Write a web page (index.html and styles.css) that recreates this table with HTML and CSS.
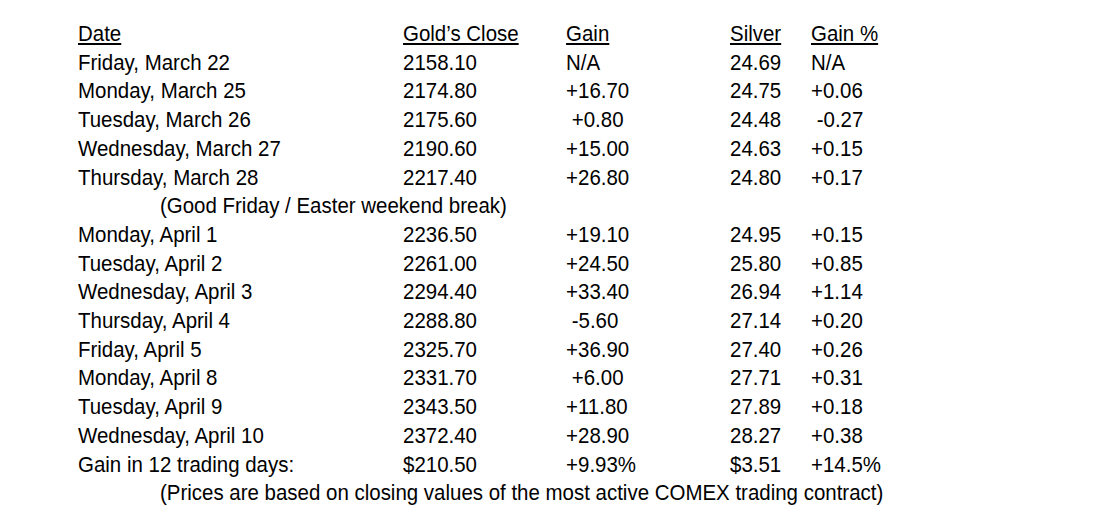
FILE: index.html
```html
<!DOCTYPE html>
<html>
<head>
<meta charset="utf-8">
<link rel="stylesheet" href="styles.css">
</head>
<body>
<div class="sheet">
  <div class="grid">
    <div class="h"><u>Date</u></div><div class="h"><u>Gold’s Close</u></div><div class="h"><u>Gain</u></div><div class="h"><u>Silver</u></div><div class="h"><u>Gain %</u></div>
    <div>Friday, March 22</div><div>2158.10</div><div>N/A</div><div>24.69</div><div>N/A</div>
    <div>Monday, March 25</div><div>2174.80</div><div>+16.70</div><div>24.75</div><div>+0.06</div>
    <div>Tuesday, March 26</div><div>2175.60</div><div>&nbsp;+0.80</div><div>24.48</div><div>&nbsp;-0.27</div>
    <div>Wednesday, March 27</div><div>2190.60</div><div>+15.00</div><div>24.63</div><div>+0.15</div>
    <div>Thursday, March 28</div><div>2217.40</div><div>+26.80</div><div>24.80</div><div>+0.17</div>
    <div class="note">(Good Friday / Easter weekend break)</div>
    <div>Monday, April 1</div><div>2236.50</div><div>+19.10</div><div>24.95</div><div>+0.15</div>
    <div>Tuesday, April 2</div><div>2261.00</div><div>+24.50</div><div>25.80</div><div>+0.85</div>
    <div>Wednesday, April 3</div><div>2294.40</div><div>+33.40</div><div>26.94</div><div>+1.14</div>
    <div>Thursday, April 4</div><div>2288.80</div><div>&nbsp;-5.60</div><div>27.14</div><div>+0.20</div>
    <div>Friday, April 5</div><div>2325.70</div><div>+36.90</div><div>27.40</div><div>+0.26</div>
    <div>Monday, April 8</div><div>2331.70</div><div>&nbsp;+6.00</div><div>27.71</div><div>+0.31</div>
    <div>Tuesday, April 9</div><div>2343.50</div><div>+11.80</div><div>27.89</div><div>+0.18</div>
    <div>Wednesday, April 10</div><div>2372.40</div><div>+28.90</div><div>28.27</div><div>+0.38</div>
    <div>Gain in 12 trading days:</div><div>$210.50</div><div>+9.93%</div><div>$3.51</div><div>+14.5%</div>
    <div class="note">(Prices are based on closing values of the most active COMEX trading contract)</div>
  </div>
</div>
</body>
</html>
```

FILE: styles.css
```css
html, body {
  margin: 0;
  padding: 0;
  background: #ffffff;
}
.sheet {
  padding: 20px 0 0 78px;
  font-family: "Liberation Sans", Arial, sans-serif;
  font-size: 22px;
  line-height: 28.7px;
  color: #000;
}
.grid {
  display: grid;
  grid-template-columns: 349.5px 175.3px 176.3px 87.1px auto;
  white-space: nowrap;
  transform: scaleX(0.93);
  transform-origin: 0 0;
}
.grid u {
  text-decoration-thickness: 2px;
  text-underline-offset: 2px;
}
.note {
  grid-column: 1 / -1;
  padding-left: 88.2px;
}
```
